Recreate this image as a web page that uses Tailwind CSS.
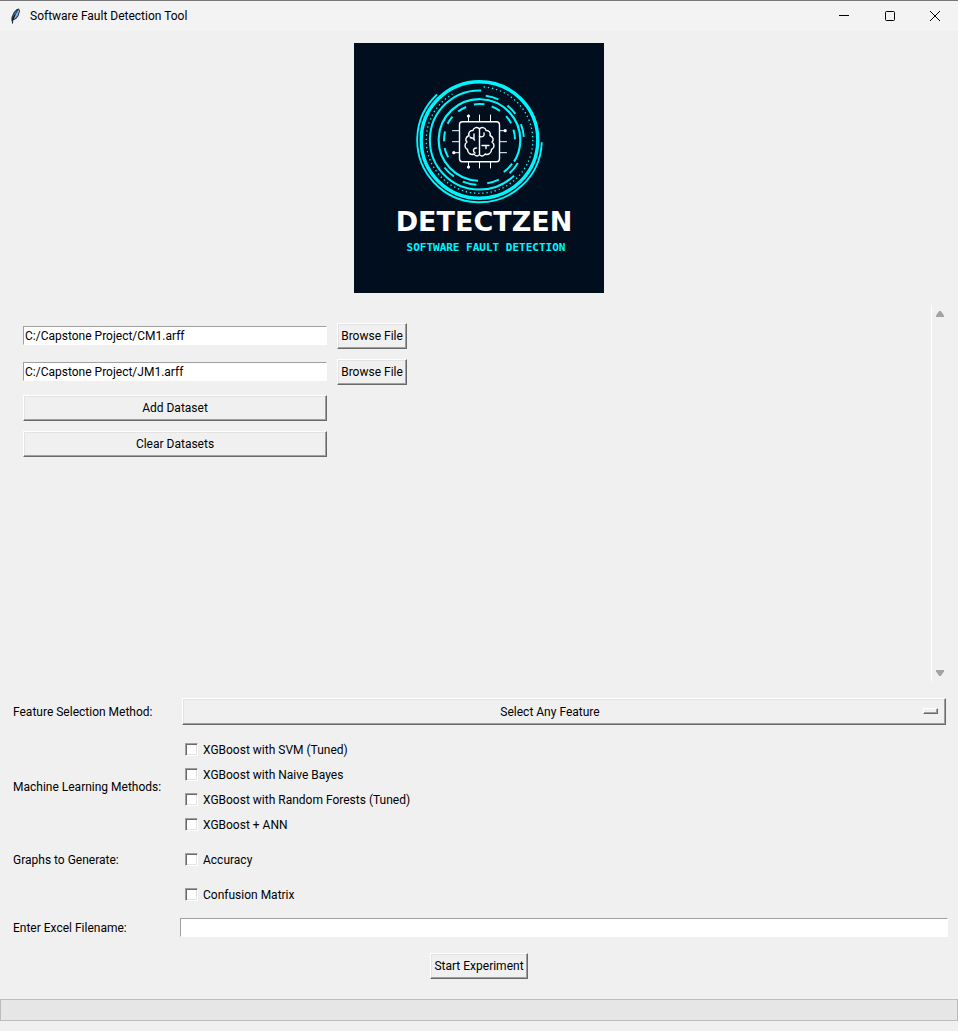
<!DOCTYPE html>
<html lang="en">
<head>
<meta charset="utf-8">
<meta name="viewport" content="width=device-width, initial-scale=1">
<title>Software Fault Detection Tool</title>
<script src="https://cdn.jsdelivr.net/npm/@tailwindcss/browser@4"></script>
</head>
<body class="flex min-h-screen flex-col bg-[#f0f0f0] font-['Segoe_UI','Roboto',sans-serif] text-xs text-black">

<header class="flex h-[31px] shrink-0 items-center border-t border-[#777] bg-[#f3f3f3] pl-2">
  <svg class="h-4 w-4" viewBox="0 0 16 16" aria-hidden="true">
    <path d="M3.5 13.5 3.4 9.5 5.5 4.5 8.5 1.2 11 .6 12 3 10.500 8 8 11 4.8 12.500Z" fill="#26303c"/>
    <path d="M4.4 10.5 6 5.4 9 2 7.3 6.5Z" fill="#3d6fb5"/>
    <path d="M5.800 11 8 6 10.5 1.6 11 3.2 9.600 7.6 7.500 10Z" fill="#7fb8f0"/>
    <path d="M7 6.5 4.8 11.2 4.5 15.5" fill="none" stroke="#111"/>
  </svg>
  <h1 class="ml-1.5 grow">Software Fault Detection Tool</h1>
  <button class="flex h-[30px] w-[46px] items-center justify-center" aria-label="Minimize"><svg class="h-3 w-3" viewBox="0 0 12 12"><path d="M1 5.500h10" stroke="#000"/></svg></button>
  <button class="flex h-[30px] w-[45px] items-center justify-center" aria-label="Maximize"><svg class="h-3 w-3" viewBox="0 0 12 12"><rect x="1.5" y="1.5" width="9" height="9" rx="1" fill="none" stroke="#000"/></svg></button>
  <button class="flex h-[30px] w-[46px] items-center justify-center" aria-label="Close"><svg class="h-3 w-3" viewBox="0 0 12 12"><path d="M1 1l10 10M11 1 1 11" stroke="#000"/></svg></button>
</header>

<main class="flex grow flex-col">
  <svg class="mx-auto mt-3 h-[250px] w-[250px] shrink-0" viewBox="0 0 250 250" role="img" aria-label="DetectZen logo">
    <rect width="250" height="250" fill="#010e1e"/>
    <g transform="translate(125.5 97)" fill="none" stroke="#00f6ff">
      <circle r="58.3" stroke-width="3.400"/>
      <circle r="62.3" stroke-width="1.900" pathLength="360" stroke-dasharray="225 360" transform="rotate(2)"/>
      <circle r="53.3" stroke-width="1.300" pathLength="360" stroke-dasharray="1.5 3"/>
      <path d="M-27 -46 A53.300 53.300 0 0 1 3 -53.200" stroke="#010e1e" stroke-width="3"/>
      <circle r="49.6" stroke-width="2" pathLength="360" stroke-dasharray="226 360" transform="rotate(46)"/>
      <circle r="40.8" stroke-width="2.2" pathLength="360" stroke-dasharray="300 360" transform="rotate(92)"/>
      <g stroke-width="2">
        <circle r="36" pathLength="360" stroke-dasharray="17 360" transform="rotate(261)"/>
        <circle r="35.6" pathLength="360" stroke-dasharray="15 360" transform="rotate(290)"/>
        <circle r="35.6" pathLength="360" stroke-dasharray="15 360" transform="rotate(233)"/>
        <circle r="35.8" pathLength="360" stroke-dasharray="14 360" transform="rotate(207)"/>
        <circle r="35.8" pathLength="360" stroke-dasharray="14 360" transform="rotate(318)"/>
        <circle r="35.5" pathLength="360" stroke-dasharray="16 360" transform="rotate(178)"/>
        <circle r="35.5" pathLength="360" stroke-dasharray="16 360" transform="rotate(343)"/>
        <circle r="35.8" pathLength="360" stroke-dasharray="16 360" transform="rotate(151)"/>
        <circle r="44.8" pathLength="360" stroke-dasharray="17 360" transform="rotate(278)"/>
        <circle r="44.4" pathLength="360" stroke-dasharray="15 360" transform="rotate(309)"/>
        <circle r="44.4" pathLength="360" stroke-dasharray="17 360" transform="rotate(339)"/>
        <circle r="44.6" pathLength="360" stroke-dasharray="17 360" transform="rotate(125)"/>
        <circle r="44.8" pathLength="360" stroke-dasharray="18 360" transform="rotate(94)"/>
        <circle r="44" pathLength="360" stroke-dasharray="16 360" transform="rotate(64)"/>
        <circle r="44.8" pathLength="360" stroke-dasharray="17 360" transform="rotate(31)"/>
        <circle r="40.2" pathLength="360" stroke-dasharray="17 360" transform="rotate(36)"/>
      </g>
    </g>
    <g transform="translate(125.5 97)" fill="none" stroke="#fff" stroke-width="1.4" stroke-linecap="round" stroke-linejoin="round">
      <rect x="-20" y="-18.3" width="40" height="40" rx="3"/>
      <path stroke-width="1" d="M-11-25V-18.3M0-25V-18.3M11-25V-18.3M-11 22V28M0 22V28M11 22V28M-27-9.3H-20M-27 1.7H-20M-26 12.7H-20M20-9.3H26M20 1.7H27M20 12.7H27"/>
      <path d="M0-11.5V14.5M0-11C-2-13.5-6-12.5-6.5-9.5C-9.5-10-11.5-7-10.5-4.5C-14-3-14.5 0-12.5 2C-15.5 4-15 8-12 9.5C-12 13-8.5 15.5-5.5 14C-4 16.5-1 16.5 0 14.5M0-11C2-13.5 6-12.5 6.5-9.5C9.5-10 11.5-7 10.5-4.5C14-3 14.5 0 12.5 2C15.5 4 15 8 12 9.5C12 13 8.5 15.5 5.5 14C4 16.5 1 16.5 0 14.5"/>
      <path d="M-9.5-3L-8-2M-5.5-6V-1.5M-8.5-2C-7-3-6-1.5-5 0M-4.5 13C-7 11-6.5 8-3 8M0-3.5C3-2.5 5.5-4 4.5-7M2.5 5.5H9.5M6.500 5.5V8.5"/>
      <g fill="#fff" stroke="none"><circle cx="-11" cy="-24" r="1.6"/><circle cx="-11" cy="27" r="1.6"/><circle cx="-25.7" cy="12.7" r="1.6"/><circle cx="25.7" cy="-9.3" r="1.6"/></g>
    </g>
    <text x="130" y="188" text-anchor="middle" fill="#fff" font-family="DejaVu Sans" font-weight="700" font-size="27">DETECTZEN</text>
    <text x="132" y="208" text-anchor="middle" fill="#00f6ff" font-family="DejaVu Sans Mono" font-weight="700" font-size="11">SOFTWARE FAULT DETECTION</text>
  </svg>

  <section class="mt-3 mr-2.5 flex min-h-[376px] grow" aria-label="Datasets">
    <div class="grow pt-[18px] pl-[23px]">
      <div class="grid w-96 grid-cols-[1fr_70px] items-center gap-2.5">
        <input aria-label="Dataset 1" value="C:/Capstone Project/CM1.arff" class="mb-px h-[19px] w-full border border-t-[#a0a0a0] border-r-white border-b-white border-l-[#a0a0a0] bg-white px-px outline-none">
        <button class="h-[26px] border border-t-white border-r-[#696969] border-b-[#696969] border-l-white whitespace-nowrap shadow-[inset_-1px_-1px_#a0a0a0,inset_1px_1px_#e3e3e3]">Browse File</button>
        <input aria-label="Dataset 2" value="C:/Capstone Project/JM1.arff" class="mb-px h-[19px] w-full border border-t-[#a0a0a0] border-r-white border-b-white border-l-[#a0a0a0] bg-white px-px outline-none">
        <button class="h-[26px] border border-t-white border-r-[#696969] border-b-[#696969] border-l-white whitespace-nowrap shadow-[inset_-1px_-1px_#a0a0a0,inset_1px_1px_#e3e3e3]">Browse File</button>
        <button class="col-start-1 h-[26px] border border-t-white border-r-[#696969] border-b-[#696969] border-l-white shadow-[inset_-1px_-1px_#a0a0a0,inset_1px_1px_#e3e3e3]">Add Dataset</button>
        <button class="col-start-1 h-[26px] border border-t-white border-r-[#696969] border-b-[#696969] border-l-white shadow-[inset_-1px_-1px_#a0a0a0,inset_1px_1px_#e3e3e3]">Clear Datasets</button>
      </div>
    </div>
    <div class="flex w-[17px] flex-col items-center justify-between border-l border-white pt-[5px] pb-1">
      <button aria-label="Scroll up"><svg class="block h-2 w-2" viewBox="0 0 8 8"><path d="M0 7V5.5L3.2 1h1.6L8 5.5V7Z" fill="#a3a3a3"/></svg></button>
      <button aria-label="Scroll down"><svg class="block h-2 w-2" viewBox="0 0 8 8"><path d="M0 1V2.5L3.2 7h1.6L8 2.5V1Z" fill="#a3a3a3"/></svg></button>
    </div>
  </section>

  <form class="mt-[17px] shrink-0">
    <div class="grid grid-cols-[167px_1fr] items-center pr-2.5 pl-[13px]">
      <label for="feature">Feature Selection Method:</label>
      <div class="relative mr-0.5 ml-0.5">
        <select id="feature" class="block h-[27px] w-full appearance-none border border-t-white border-r-[#696969] border-b-[#696969] border-l-white bg-[#f0f0f0] pr-7 text-center [text-align-last:center] shadow-[inset_-1px_-1px_#a0a0a0,inset_1px_1px_#e3e3e3]"><option>Select Any Feature</option></select>
        <span class="pointer-events-none absolute top-2.5 right-2 h-1.5 w-[15px] border border-t-white border-r-[#696969] border-b-[#696969] border-l-white shadow-[inset_-1px_-1px_#a0a0a0]"></span>
      </div>

      <span id="methods" class="mt-3">Machine Learning Methods:</span>
      <div role="group" aria-labelledby="methods" class="mt-3 ml-[5px]">
        <label class="flex h-[25px] items-center gap-[5px]"><input type="checkbox" class="h-[13px] w-[13px] appearance-none border border-t-[#a0a0a0] border-r-white border-b-white border-l-[#a0a0a0] bg-white shadow-[inset_1px_1px_#696969,inset_-1px_-1px_#e3e3e3]">XGBoost with SVM (Tuned)</label>
        <label class="flex h-[25px] items-center gap-[5px]"><input type="checkbox" class="h-[13px] w-[13px] appearance-none border border-t-[#a0a0a0] border-r-white border-b-white border-l-[#a0a0a0] bg-white shadow-[inset_1px_1px_#696969,inset_-1px_-1px_#e3e3e3]">XGBoost with Naive Bayes</label>
        <label class="flex h-[25px] items-center gap-[5px]"><input type="checkbox" class="h-[13px] w-[13px] appearance-none border border-t-[#a0a0a0] border-r-white border-b-white border-l-[#a0a0a0] bg-white shadow-[inset_1px_1px_#696969,inset_-1px_-1px_#e3e3e3]">XGBoost with Random Forests (Tuned)</label>
        <label class="flex h-[25px] items-center gap-[5px]"><input type="checkbox" class="h-[13px] w-[13px] appearance-none border border-t-[#a0a0a0] border-r-white border-b-white border-l-[#a0a0a0] bg-white shadow-[inset_1px_1px_#696969,inset_-1px_-1px_#e3e3e3]">XGBoost + ANN</label>
      </div>

      <span>Graphs to Generate:</span>
      <label class="ml-[5px] flex h-[45px] items-center gap-[5px]"><input type="checkbox" class="h-[13px] w-[13px] appearance-none border border-t-[#a0a0a0] border-r-white border-b-white border-l-[#a0a0a0] bg-white shadow-[inset_1px_1px_#696969,inset_-1px_-1px_#e3e3e3]">Accuracy</label>
      <label class="col-start-2 ml-[5px] flex h-[25px] items-center gap-[5px]"><input type="checkbox" class="h-[13px] w-[13px] appearance-none border border-t-[#a0a0a0] border-r-white border-b-white border-l-[#a0a0a0] bg-white shadow-[inset_1px_1px_#696969,inset_-1px_-1px_#e3e3e3]">Confusion Matrix</label>

      <label for="filename" class="mt-[11px]">Enter Excel Filename:</label>
      <input id="filename" class="mt-[11px] mb-px h-[19px] w-full border border-t-[#a0a0a0] border-r-white border-b-white border-l-[#a0a0a0] bg-white px-px outline-none">
    </div>
    <button type="button" class="mx-auto mt-[15px] block h-[26px] w-[98px] border border-t-white border-r-[#696969] border-b-[#696969] border-l-white whitespace-nowrap shadow-[inset_-1px_-1px_#a0a0a0,inset_1px_1px_#e3e3e3]">Start Experiment</button>
  </form>
  <div role="progressbar" aria-label="Experiment progress" aria-valuenow="0" aria-valuemin="0" aria-valuemax="100" class="mt-5 mb-2.5 h-[22px] shrink-0 border border-[#bcbcbc] bg-[#e6e6e6]"></div>
</main>
</body>
</html>
